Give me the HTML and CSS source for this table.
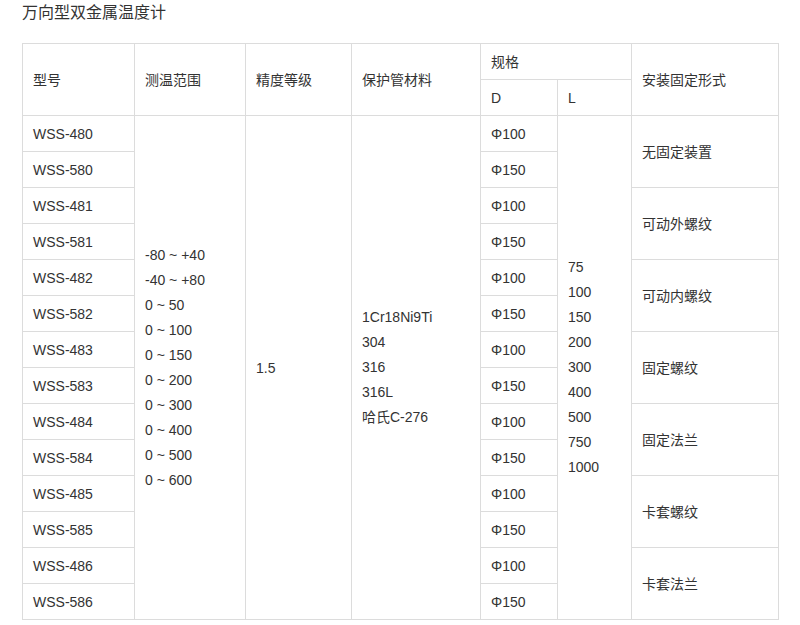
FILE: index.html
```html
<!DOCTYPE html>
<html lang="zh">
<head>
<meta charset="utf-8">
<link rel="stylesheet" href="styles.css">
</head>
<body>
<div class="page">
  <h1 class="title">万向型双金属温度计</h1>
  <table class="spec">
    <colgroup>
      <col class="c1"><col class="c2"><col class="c3"><col class="c4"><col class="c5"><col class="c6"><col class="c7">
    </colgroup>
    <tr>
      <td rowspan="2">型号</td>
      <td rowspan="2">测温范围</td>
      <td rowspan="2">精度等级</td>
      <td rowspan="2">保护管材料</td>
      <td colspan="2">规格</td>
      <td rowspan="2">安装固定形式</td>
    </tr>
    <tr>
      <td>D</td>
      <td>L</td>
    </tr>
    <tr>
      <td>WSS-480</td>
      <td rowspan="14" class="multi">-80 ~ +40<br>-40 ~ +80<br>0 ~ 50<br>0 ~ 100<br>0 ~ 150<br>0 ~ 200<br>0 ~ 300<br>0 ~ 400<br>0 ~ 500<br>0 ~ 600</td>
      <td rowspan="14">1.5</td>
      <td rowspan="14" class="multi">1Cr18Ni9Ti<br>304<br>316<br>316L<br>哈氏C-276</td>
      <td>Φ100</td>
      <td rowspan="14" class="multi">75<br>100<br>150<br>200<br>300<br>400<br>500<br>750<br>1000</td>
      <td rowspan="2">无固定装置</td>
    </tr>
    <tr><td>WSS-580</td><td>Φ150</td></tr>
    <tr><td>WSS-481</td><td>Φ100</td><td rowspan="2">可动外螺纹</td></tr>
    <tr><td>WSS-581</td><td>Φ150</td></tr>
    <tr><td>WSS-482</td><td>Φ100</td><td rowspan="2">可动内螺纹</td></tr>
    <tr><td>WSS-582</td><td>Φ150</td></tr>
    <tr><td>WSS-483</td><td>Φ100</td><td rowspan="2">固定螺纹</td></tr>
    <tr><td>WSS-583</td><td>Φ150</td></tr>
    <tr><td>WSS-484</td><td>Φ100</td><td rowspan="2">固定法兰</td></tr>
    <tr><td>WSS-584</td><td>Φ150</td></tr>
    <tr><td>WSS-485</td><td>Φ100</td><td rowspan="2">卡套螺纹</td></tr>
    <tr><td>WSS-585</td><td>Φ150</td></tr>
    <tr><td>WSS-486</td><td>Φ100</td><td rowspan="2">卡套法兰</td></tr>
    <tr><td>WSS-586</td><td>Φ150</td></tr>
  </table>
</div>
</body>
</html>
```
FILE: styles.css
```css
html, body {
  margin: 0;
  padding: 0;
  background: #fff;
}
body {
  font-family: "Liberation Sans", "Noto Sans CJK SC", Arial, sans-serif;
  color: #333;
  font-size: 14px;
}
.page {
  padding: 3px 22px 0 22px;
}
.title {
  margin: 0;
  font-size: 16px;
  font-weight: normal;
  line-height: 20px;
  color: #333;
  height: 40px;
}
.spec {
  border-collapse: collapse;
  table-layout: fixed;
  width: 756px;
}
.spec td {
  border: 1px solid #dcdcdc;
  height: 36px;
  padding: 0 10px;
  line-height: 20px;
  vertical-align: middle;
  box-sizing: border-box;
}
.spec td.multi {
  line-height: 25px;
}
.c1 { width: 112px; }
.c2 { width: 111px; }
.c3 { width: 106px; }
.c4 { width: 129px; }
.c5 { width: 77px; }
.c6 { width: 74px; }
.c7 { width: 147px; }
```
